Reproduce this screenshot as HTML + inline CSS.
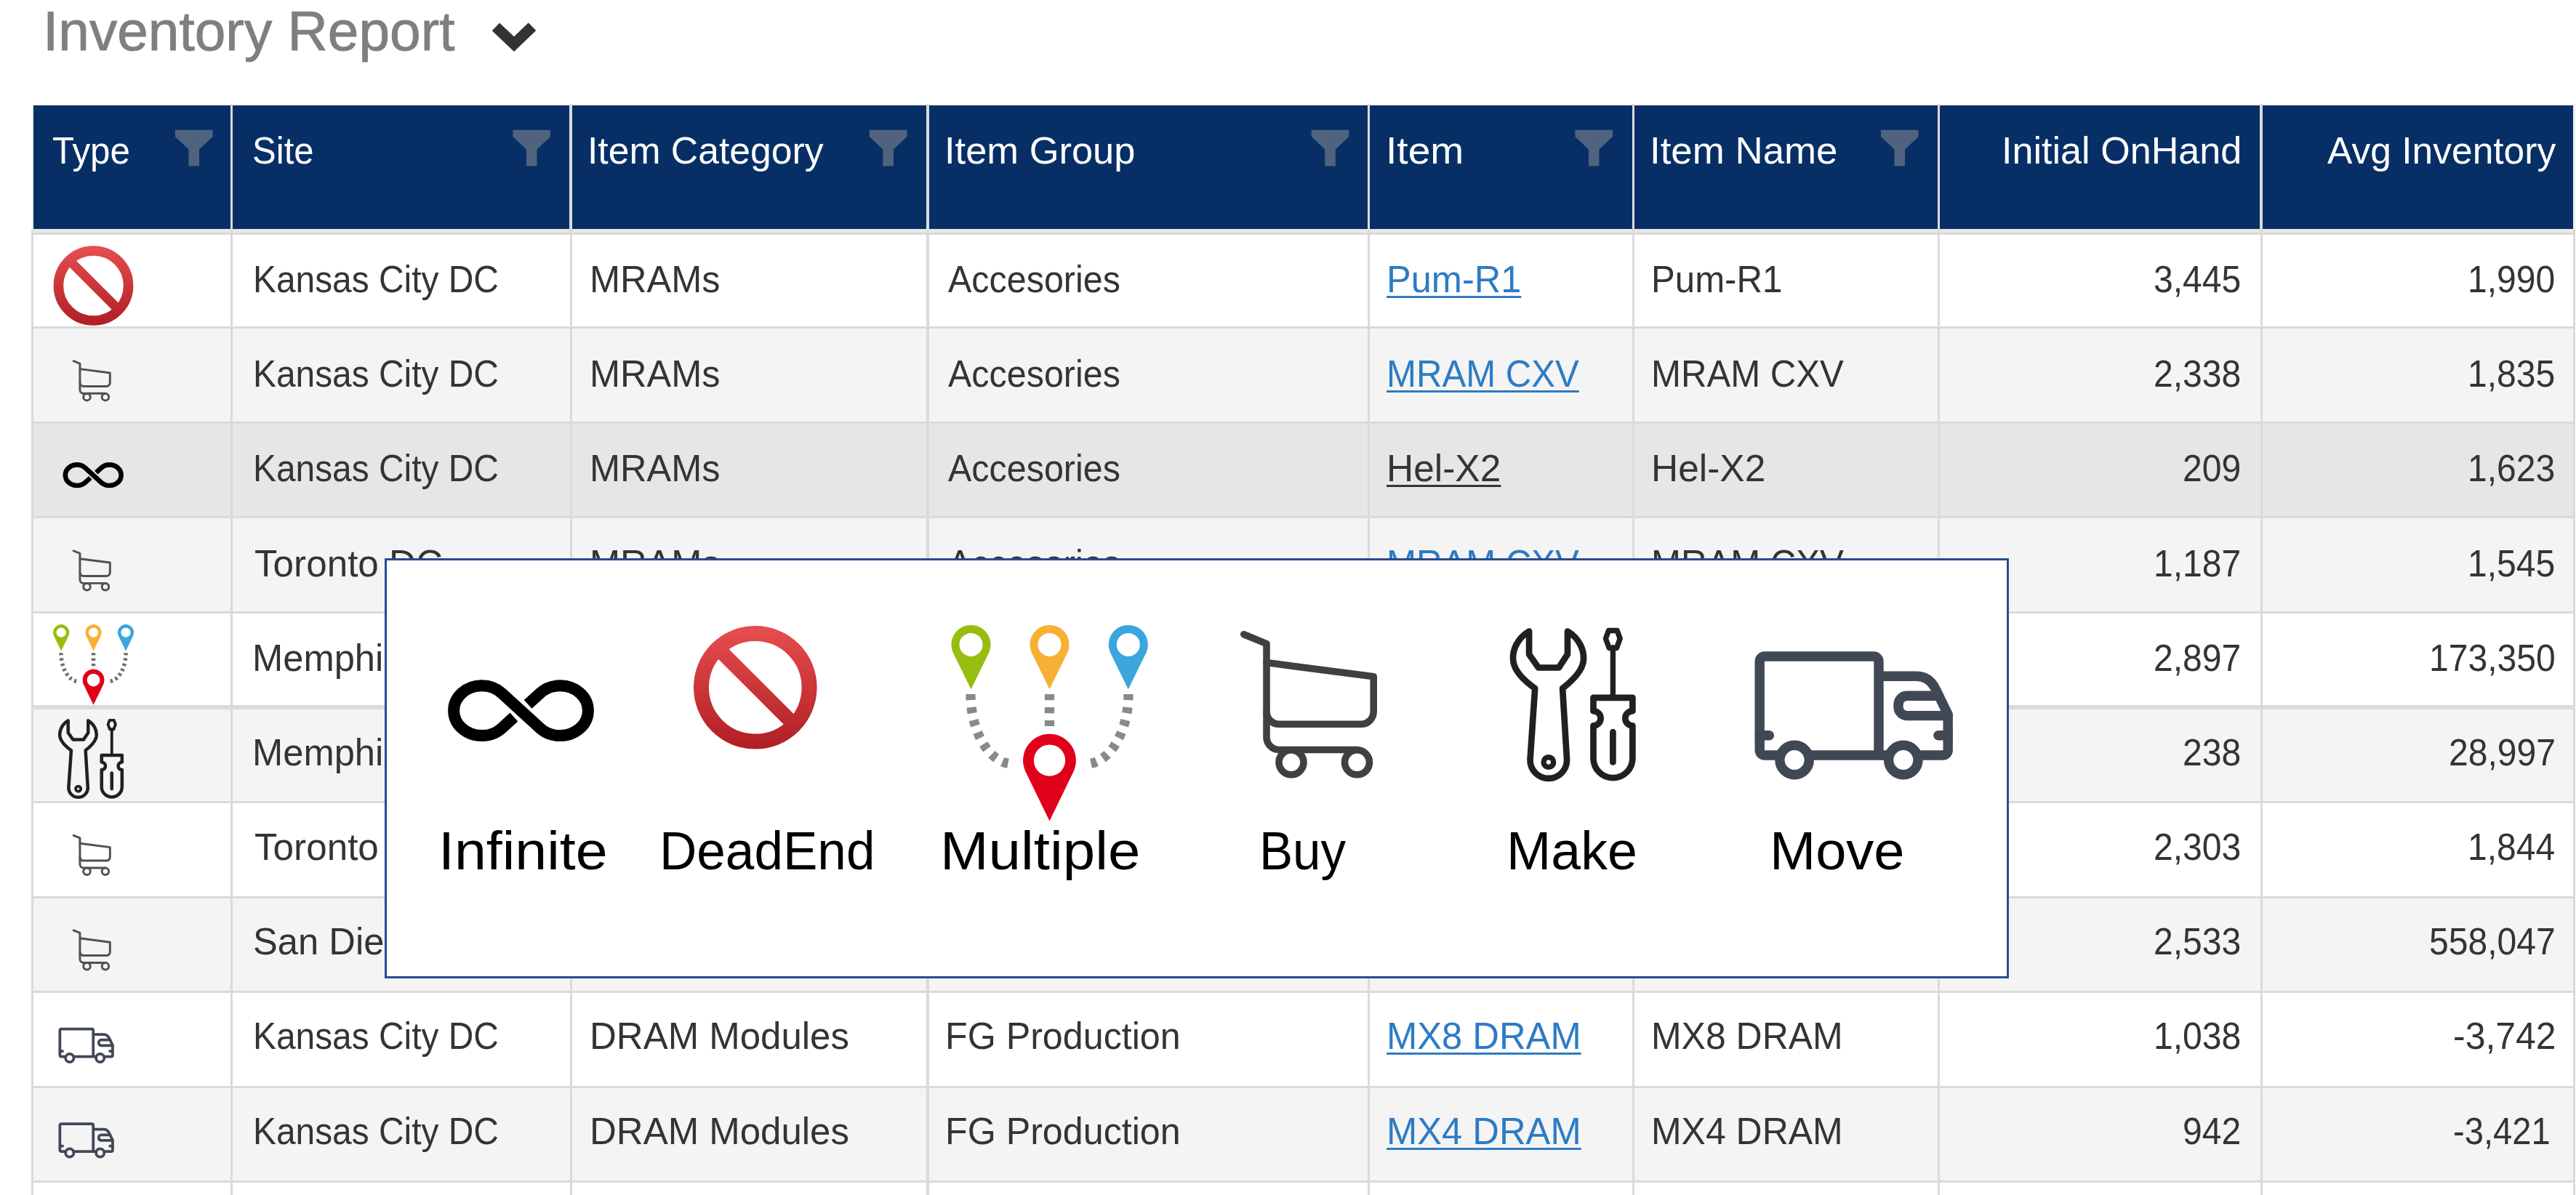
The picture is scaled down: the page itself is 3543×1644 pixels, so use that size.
<!DOCTYPE html><html><head><meta charset="utf-8"><style>
html,body{margin:0;padding:0}body{width:3543px;height:1644px;overflow:hidden;background:#fff;position:relative;font-family:"Liberation Sans",sans-serif}
.t{position:absolute;white-space:nowrap;line-height:1;transform-origin:0 0}
.r{position:absolute}
svg{position:absolute;overflow:visible}
</style></head><body>
<div class="t" style="left:59.34px;top:4.67px;font-size:76px;color:#7F7F7F;transform:scaleX(1.0083);-webkit-text-stroke:0.9px #7F7F7F;">Inventory Report</div>
<svg style="left:0;top:0" width="3543" height="1644"><polyline points="681.9,36.9 707,60.7 732,36.7" fill="none" stroke="#333333" stroke-width="15" stroke-linecap="butt" stroke-linejoin="miter"/></svg>
<div class="r" style="left:43.5px;top:144px;width:3498.0px;height:1500px;background:#EEECE9"></div>
<div class="r" style="left:43px;top:316px;width:3499px;height:1328px;background:#DADADA"></div>
<div class="r" style="left:46.00px;top:322.50px;width:271.20px;height:126.90px;background:#FFFFFF"></div>
<div class="r" style="left:320.20px;top:322.50px;width:463.50px;height:126.90px;background:#FFFFFF"></div>
<div class="r" style="left:786.70px;top:322.50px;width:487.80px;height:126.90px;background:#FFFFFF"></div>
<div class="r" style="left:1277.50px;top:322.50px;width:603.70px;height:126.90px;background:#FFFFFF"></div>
<div class="r" style="left:1884.20px;top:322.50px;width:360.80px;height:126.90px;background:#FFFFFF"></div>
<div class="r" style="left:2248.00px;top:322.50px;width:417.00px;height:126.90px;background:#FFFFFF"></div>
<div class="r" style="left:2668.00px;top:322.50px;width:440.50px;height:126.90px;background:#FFFFFF"></div>
<div class="r" style="left:3111.50px;top:322.50px;width:427.30px;height:126.90px;background:#FFFFFF"></div>
<div class="r" style="left:46.00px;top:452.40px;width:271.20px;height:127.52px;background:#F4F4F4"></div>
<div class="r" style="left:320.20px;top:452.40px;width:463.50px;height:127.52px;background:#F4F4F4"></div>
<div class="r" style="left:786.70px;top:452.40px;width:487.80px;height:127.52px;background:#F4F4F4"></div>
<div class="r" style="left:1277.50px;top:452.40px;width:603.70px;height:127.52px;background:#F4F4F4"></div>
<div class="r" style="left:1884.20px;top:452.40px;width:360.80px;height:127.52px;background:#F4F4F4"></div>
<div class="r" style="left:2248.00px;top:452.40px;width:417.00px;height:127.52px;background:#F4F4F4"></div>
<div class="r" style="left:2668.00px;top:452.40px;width:440.50px;height:127.52px;background:#F4F4F4"></div>
<div class="r" style="left:3111.50px;top:452.40px;width:427.30px;height:127.52px;background:#F4F4F4"></div>
<div class="r" style="left:46.00px;top:582.92px;width:271.20px;height:127.52px;background:#E6E6E6"></div>
<div class="r" style="left:320.20px;top:582.92px;width:463.50px;height:127.52px;background:#E6E6E6"></div>
<div class="r" style="left:786.70px;top:582.92px;width:487.80px;height:127.52px;background:#E6E6E6"></div>
<div class="r" style="left:1277.50px;top:582.92px;width:603.70px;height:127.52px;background:#E6E6E6"></div>
<div class="r" style="left:1884.20px;top:582.92px;width:360.80px;height:127.52px;background:#E6E6E6"></div>
<div class="r" style="left:2248.00px;top:582.92px;width:417.00px;height:127.52px;background:#E6E6E6"></div>
<div class="r" style="left:2668.00px;top:582.92px;width:440.50px;height:127.52px;background:#E6E6E6"></div>
<div class="r" style="left:3111.50px;top:582.92px;width:427.30px;height:127.52px;background:#E6E6E6"></div>
<div class="r" style="left:46.00px;top:713.44px;width:271.20px;height:127.52px;background:#F4F4F4"></div>
<div class="r" style="left:320.20px;top:713.44px;width:463.50px;height:127.52px;background:#F4F4F4"></div>
<div class="r" style="left:786.70px;top:713.44px;width:487.80px;height:127.52px;background:#F4F4F4"></div>
<div class="r" style="left:1277.50px;top:713.44px;width:603.70px;height:127.52px;background:#F4F4F4"></div>
<div class="r" style="left:1884.20px;top:713.44px;width:360.80px;height:127.52px;background:#F4F4F4"></div>
<div class="r" style="left:2248.00px;top:713.44px;width:417.00px;height:127.52px;background:#F4F4F4"></div>
<div class="r" style="left:2668.00px;top:713.44px;width:440.50px;height:127.52px;background:#F4F4F4"></div>
<div class="r" style="left:3111.50px;top:713.44px;width:427.30px;height:127.52px;background:#F4F4F4"></div>
<div class="r" style="left:46.00px;top:843.96px;width:271.20px;height:127.52px;background:#FFFFFF"></div>
<div class="r" style="left:320.20px;top:843.96px;width:463.50px;height:127.52px;background:#FFFFFF"></div>
<div class="r" style="left:786.70px;top:843.96px;width:487.80px;height:127.52px;background:#FFFFFF"></div>
<div class="r" style="left:1277.50px;top:843.96px;width:603.70px;height:127.52px;background:#FFFFFF"></div>
<div class="r" style="left:1884.20px;top:843.96px;width:360.80px;height:127.52px;background:#FFFFFF"></div>
<div class="r" style="left:2248.00px;top:843.96px;width:417.00px;height:127.52px;background:#FFFFFF"></div>
<div class="r" style="left:2668.00px;top:843.96px;width:440.50px;height:127.52px;background:#FFFFFF"></div>
<div class="r" style="left:3111.50px;top:843.96px;width:427.30px;height:127.52px;background:#FFFFFF"></div>
<div class="r" style="left:46.00px;top:974.48px;width:271.20px;height:127.52px;background:#F4F4F4"></div>
<div class="r" style="left:320.20px;top:974.48px;width:463.50px;height:127.52px;background:#F4F4F4"></div>
<div class="r" style="left:786.70px;top:974.48px;width:487.80px;height:127.52px;background:#F4F4F4"></div>
<div class="r" style="left:1277.50px;top:974.48px;width:603.70px;height:127.52px;background:#F4F4F4"></div>
<div class="r" style="left:1884.20px;top:974.48px;width:360.80px;height:127.52px;background:#F4F4F4"></div>
<div class="r" style="left:2248.00px;top:974.48px;width:417.00px;height:127.52px;background:#F4F4F4"></div>
<div class="r" style="left:2668.00px;top:974.48px;width:440.50px;height:127.52px;background:#F4F4F4"></div>
<div class="r" style="left:3111.50px;top:974.48px;width:427.30px;height:127.52px;background:#F4F4F4"></div>
<div class="r" style="left:46.00px;top:1105.00px;width:271.20px;height:127.52px;background:#FFFFFF"></div>
<div class="r" style="left:320.20px;top:1105.00px;width:463.50px;height:127.52px;background:#FFFFFF"></div>
<div class="r" style="left:786.70px;top:1105.00px;width:487.80px;height:127.52px;background:#FFFFFF"></div>
<div class="r" style="left:1277.50px;top:1105.00px;width:603.70px;height:127.52px;background:#FFFFFF"></div>
<div class="r" style="left:1884.20px;top:1105.00px;width:360.80px;height:127.52px;background:#FFFFFF"></div>
<div class="r" style="left:2248.00px;top:1105.00px;width:417.00px;height:127.52px;background:#FFFFFF"></div>
<div class="r" style="left:2668.00px;top:1105.00px;width:440.50px;height:127.52px;background:#FFFFFF"></div>
<div class="r" style="left:3111.50px;top:1105.00px;width:427.30px;height:127.52px;background:#FFFFFF"></div>
<div class="r" style="left:46.00px;top:1235.52px;width:271.20px;height:127.52px;background:#F4F4F4"></div>
<div class="r" style="left:320.20px;top:1235.52px;width:463.50px;height:127.52px;background:#F4F4F4"></div>
<div class="r" style="left:786.70px;top:1235.52px;width:487.80px;height:127.52px;background:#F4F4F4"></div>
<div class="r" style="left:1277.50px;top:1235.52px;width:603.70px;height:127.52px;background:#F4F4F4"></div>
<div class="r" style="left:1884.20px;top:1235.52px;width:360.80px;height:127.52px;background:#F4F4F4"></div>
<div class="r" style="left:2248.00px;top:1235.52px;width:417.00px;height:127.52px;background:#F4F4F4"></div>
<div class="r" style="left:2668.00px;top:1235.52px;width:440.50px;height:127.52px;background:#F4F4F4"></div>
<div class="r" style="left:3111.50px;top:1235.52px;width:427.30px;height:127.52px;background:#F4F4F4"></div>
<div class="r" style="left:46.00px;top:1366.04px;width:271.20px;height:127.52px;background:#FFFFFF"></div>
<div class="r" style="left:320.20px;top:1366.04px;width:463.50px;height:127.52px;background:#FFFFFF"></div>
<div class="r" style="left:786.70px;top:1366.04px;width:487.80px;height:127.52px;background:#FFFFFF"></div>
<div class="r" style="left:1277.50px;top:1366.04px;width:603.70px;height:127.52px;background:#FFFFFF"></div>
<div class="r" style="left:1884.20px;top:1366.04px;width:360.80px;height:127.52px;background:#FFFFFF"></div>
<div class="r" style="left:2248.00px;top:1366.04px;width:417.00px;height:127.52px;background:#FFFFFF"></div>
<div class="r" style="left:2668.00px;top:1366.04px;width:440.50px;height:127.52px;background:#FFFFFF"></div>
<div class="r" style="left:3111.50px;top:1366.04px;width:427.30px;height:127.52px;background:#FFFFFF"></div>
<div class="r" style="left:46.00px;top:1496.56px;width:271.20px;height:127.52px;background:#F4F4F4"></div>
<div class="r" style="left:320.20px;top:1496.56px;width:463.50px;height:127.52px;background:#F4F4F4"></div>
<div class="r" style="left:786.70px;top:1496.56px;width:487.80px;height:127.52px;background:#F4F4F4"></div>
<div class="r" style="left:1277.50px;top:1496.56px;width:603.70px;height:127.52px;background:#F4F4F4"></div>
<div class="r" style="left:1884.20px;top:1496.56px;width:360.80px;height:127.52px;background:#F4F4F4"></div>
<div class="r" style="left:2248.00px;top:1496.56px;width:417.00px;height:127.52px;background:#F4F4F4"></div>
<div class="r" style="left:2668.00px;top:1496.56px;width:440.50px;height:127.52px;background:#F4F4F4"></div>
<div class="r" style="left:3111.50px;top:1496.56px;width:427.30px;height:127.52px;background:#F4F4F4"></div>
<div class="r" style="left:46.00px;top:1627.08px;width:271.20px;height:72.92px;background:#FFFFFF"></div>
<div class="r" style="left:320.20px;top:1627.08px;width:463.50px;height:72.92px;background:#FFFFFF"></div>
<div class="r" style="left:786.70px;top:1627.08px;width:487.80px;height:72.92px;background:#FFFFFF"></div>
<div class="r" style="left:1277.50px;top:1627.08px;width:603.70px;height:72.92px;background:#FFFFFF"></div>
<div class="r" style="left:1884.20px;top:1627.08px;width:360.80px;height:72.92px;background:#FFFFFF"></div>
<div class="r" style="left:2248.00px;top:1627.08px;width:417.00px;height:72.92px;background:#FFFFFF"></div>
<div class="r" style="left:2668.00px;top:1627.08px;width:440.50px;height:72.92px;background:#FFFFFF"></div>
<div class="r" style="left:3111.50px;top:1627.08px;width:427.30px;height:72.92px;background:#FFFFFF"></div>
<div class="r" style="left:46px;top:969.98px;width:3493px;height:6px;background:#DADADA"></div>
<div class="r" style="left:46.4px;top:145.3px;width:3492.60px;height:170.10px;background:#072F66"></div>
<div class="r" style="left:46.4px;top:315.4px;width:3492.60px;height:4.4px;background:#EAE8E5"></div>
<div class="r" style="left:316.90px;top:143px;width:3.6px;height:178px;background:#DCDCDC"></div>
<div class="r" style="left:783.40px;top:143px;width:3.6px;height:178px;background:#DCDCDC"></div>
<div class="r" style="left:1274.20px;top:143px;width:3.6px;height:178px;background:#DCDCDC"></div>
<div class="r" style="left:1880.90px;top:143px;width:3.6px;height:178px;background:#DCDCDC"></div>
<div class="r" style="left:2244.70px;top:143px;width:3.6px;height:178px;background:#DCDCDC"></div>
<div class="r" style="left:2664.70px;top:143px;width:3.6px;height:178px;background:#DCDCDC"></div>
<div class="r" style="left:3108.20px;top:143px;width:3.6px;height:178px;background:#DCDCDC"></div>
<div class="t" style="left:72.45px;top:181.28px;font-size:52px;color:#FFFFFF;transform:scaleX(0.9482);">Type</div>
<div class="t" style="left:347.31px;top:181.28px;font-size:52px;color:#FFFFFF;transform:scaleX(0.9442);">Site</div>
<div class="t" style="left:808.23px;top:181.28px;font-size:52px;color:#FFFFFF;transform:scaleX(0.9938);">Item Category</div>
<div class="t" style="left:1299.15px;top:181.28px;font-size:52px;color:#FFFFFF;transform:scaleX(1.0091);">Item Group</div>
<div class="t" style="left:1905.80px;top:181.28px;font-size:52px;color:#FFFFFF;transform:scaleX(1.0602);">Item</div>
<div class="t" style="left:2268.82px;top:181.28px;font-size:52px;color:#FFFFFF;transform:scaleX(1.0166);">Item Name</div>
<div class="t" style="left:2753.29px;top:181.28px;font-size:52px;color:#FFFFFF;transform:scaleX(1.0022);">Initial OnHand</div>
<div class="t" style="left:3200.50px;top:181.28px;font-size:52px;color:#FFFFFF;transform:scaleX(0.9912);">Avg Inventory</div>
<svg style="left:0;top:0" width="1" height="1"><polygon points="240.90,178.70 292.50,178.70 292.50,188.00 274.00,205.40 274.00,228.50 259.40,228.50 259.40,205.40 240.90,188.00" fill="#50637E"/></svg>
<svg style="left:0;top:0" width="1" height="1"><polygon points="705.40,178.70 757.00,178.70 757.00,188.00 738.50,205.40 738.50,228.50 723.90,228.50 723.90,205.40 705.40,188.00" fill="#50637E"/></svg>
<svg style="left:0;top:0" width="1" height="1"><polygon points="1195.80,178.70 1247.40,178.70 1247.40,188.00 1228.90,205.40 1228.90,228.50 1214.30,228.50 1214.30,205.40 1195.80,188.00" fill="#50637E"/></svg>
<svg style="left:0;top:0" width="1" height="1"><polygon points="1803.70,178.70 1855.30,178.70 1855.30,188.00 1836.80,205.40 1836.80,228.50 1822.20,228.50 1822.20,205.40 1803.70,188.00" fill="#50637E"/></svg>
<svg style="left:0;top:0" width="1" height="1"><polygon points="2166.40,178.70 2218.00,178.70 2218.00,188.00 2199.50,205.40 2199.50,228.50 2184.90,228.50 2184.90,205.40 2166.40,188.00" fill="#50637E"/></svg>
<svg style="left:0;top:0" width="1" height="1"><polygon points="2587.00,178.70 2638.60,178.70 2638.60,188.00 2620.10,205.40 2620.10,228.50 2605.50,228.50 2605.50,205.40 2587.00,188.00" fill="#50637E"/></svg>
<div class="t" style="left:348.32px;top:358.08px;font-size:52px;color:#343434;transform:scaleX(0.9206);">Kansas City DC</div>
<div class="t" style="left:810.91px;top:358.08px;font-size:52px;color:#343434;transform:scaleX(0.9715);">MRAMs</div>
<div class="t" style="left:1304.00px;top:358.08px;font-size:52px;color:#343434;transform:scaleX(0.9313);">Accesories</div>
<div class="t" style="left:1907.11px;top:358.08px;font-size:52px;color:#2E7BC4;transform:scaleX(0.9717);text-decoration:underline;text-decoration-thickness:3px;text-underline-offset:5px;">Pum-R1</div>
<div class="t" style="left:2271.22px;top:358.08px;font-size:52px;color:#343434;transform:scaleX(0.9457);">Pum-R1</div>
<div class="t" style="left:2962.22px;top:358.08px;font-size:52px;color:#343434;transform:scaleX(0.9250);">3,445</div>
<div class="t" style="left:3394.42px;top:358.08px;font-size:52px;color:#343434;transform:scaleX(0.9250);">1,990</div>
<div class="t" style="left:348.32px;top:488.25px;font-size:52px;color:#343434;transform:scaleX(0.9206);">Kansas City DC</div>
<div class="t" style="left:810.91px;top:488.25px;font-size:52px;color:#343434;transform:scaleX(0.9715);">MRAMs</div>
<div class="t" style="left:1304.00px;top:488.25px;font-size:52px;color:#343434;transform:scaleX(0.9313);">Accesories</div>
<div class="t" style="left:1907.22px;top:488.25px;font-size:52px;color:#2E7BC4;transform:scaleX(0.9449);text-decoration:underline;text-decoration-thickness:3px;text-underline-offset:5px;">MRAM CXV</div>
<div class="t" style="left:2271.22px;top:488.25px;font-size:52px;color:#343434;transform:scaleX(0.9449);">MRAM CXV</div>
<div class="t" style="left:2962.22px;top:488.25px;font-size:52px;color:#343434;transform:scaleX(0.9250);">2,338</div>
<div class="t" style="left:3394.42px;top:488.25px;font-size:52px;color:#343434;transform:scaleX(0.9250);">1,835</div>
<div class="t" style="left:348.32px;top:618.42px;font-size:52px;color:#343434;transform:scaleX(0.9206);">Kansas City DC</div>
<div class="t" style="left:810.91px;top:618.42px;font-size:52px;color:#343434;transform:scaleX(0.9715);">MRAMs</div>
<div class="t" style="left:1304.00px;top:618.42px;font-size:52px;color:#343434;transform:scaleX(0.9313);">Accesories</div>
<div class="t" style="left:1907.04px;top:618.42px;font-size:52px;color:#343434;transform:scaleX(0.9895);text-decoration:underline;text-decoration-thickness:3px;text-underline-offset:5px;">Hel-X2</div>
<div class="t" style="left:2271.04px;top:618.42px;font-size:52px;color:#343434;transform:scaleX(0.9895);">Hel-X2</div>
<div class="t" style="left:3002.34px;top:618.42px;font-size:52px;color:#343434;transform:scaleX(0.9250);">209</div>
<div class="t" style="left:3394.42px;top:618.42px;font-size:52px;color:#343434;transform:scaleX(0.9250);">1,623</div>
<div class="t" style="left:349.51px;top:748.59px;font-size:52px;color:#343434;transform:scaleX(0.9850);">Toronto DC</div>
<div class="t" style="left:810.91px;top:748.59px;font-size:52px;color:#343434;transform:scaleX(0.9715);">MRAMs</div>
<div class="t" style="left:1304.00px;top:748.59px;font-size:52px;color:#343434;transform:scaleX(0.9313);">Accesories</div>
<div class="t" style="left:1907.22px;top:748.59px;font-size:52px;color:#2E7BC4;transform:scaleX(0.9449);text-decoration:underline;text-decoration-thickness:3px;text-underline-offset:5px;">MRAM CXV</div>
<div class="t" style="left:2271.22px;top:748.59px;font-size:52px;color:#343434;transform:scaleX(0.9449);">MRAM CXV</div>
<div class="t" style="left:2962.22px;top:748.59px;font-size:52px;color:#343434;transform:scaleX(0.9250);">1,187</div>
<div class="t" style="left:3394.42px;top:748.59px;font-size:52px;color:#343434;transform:scaleX(0.9250);">1,545</div>
<div class="t" style="left:347.10px;top:878.76px;font-size:52px;color:#343434;transform:scaleX(0.9750);">Memphis DC</div>
<div class="t" style="left:810.91px;top:878.76px;font-size:52px;color:#343434;transform:scaleX(0.9715);">MRAMs</div>
<div class="t" style="left:1304.00px;top:878.76px;font-size:52px;color:#343434;transform:scaleX(0.9313);">Accesories</div>
<div class="t" style="left:1907.22px;top:878.76px;font-size:52px;color:#2E7BC4;transform:scaleX(0.9449);text-decoration:underline;text-decoration-thickness:3px;text-underline-offset:5px;">MRAM CXV</div>
<div class="t" style="left:2271.22px;top:878.76px;font-size:52px;color:#343434;transform:scaleX(0.9449);">MRAM CXV</div>
<div class="t" style="left:2962.22px;top:878.76px;font-size:52px;color:#343434;transform:scaleX(0.9250);">2,897</div>
<div class="t" style="left:3340.91px;top:878.76px;font-size:52px;color:#343434;transform:scaleX(0.9250);">173,350</div>
<div class="t" style="left:347.10px;top:1008.93px;font-size:52px;color:#343434;transform:scaleX(0.9750);">Memphis DC</div>
<div class="t" style="left:810.91px;top:1008.93px;font-size:52px;color:#343434;transform:scaleX(0.9715);">MRAMs</div>
<div class="t" style="left:1304.00px;top:1008.93px;font-size:52px;color:#343434;transform:scaleX(0.9313);">Accesories</div>
<div class="t" style="left:1907.22px;top:1008.93px;font-size:52px;color:#2E7BC4;transform:scaleX(0.9449);text-decoration:underline;text-decoration-thickness:3px;text-underline-offset:5px;">MRAM CXV</div>
<div class="t" style="left:2271.22px;top:1008.93px;font-size:52px;color:#343434;transform:scaleX(0.9449);">MRAM CXV</div>
<div class="t" style="left:3002.34px;top:1008.93px;font-size:52px;color:#343434;transform:scaleX(0.9250);">238</div>
<div class="t" style="left:3367.67px;top:1008.93px;font-size:52px;color:#343434;transform:scaleX(0.9250);">28,997</div>
<div class="t" style="left:349.51px;top:1139.10px;font-size:52px;color:#343434;transform:scaleX(0.9850);">Toronto DC</div>
<div class="t" style="left:810.91px;top:1139.10px;font-size:52px;color:#343434;transform:scaleX(0.9715);">MRAMs</div>
<div class="t" style="left:1304.00px;top:1139.10px;font-size:52px;color:#343434;transform:scaleX(0.9313);">Accesories</div>
<div class="t" style="left:1907.22px;top:1139.10px;font-size:52px;color:#2E7BC4;transform:scaleX(0.9449);text-decoration:underline;text-decoration-thickness:3px;text-underline-offset:5px;">MRAM CXV</div>
<div class="t" style="left:2271.22px;top:1139.10px;font-size:52px;color:#343434;transform:scaleX(0.9449);">MRAM CXV</div>
<div class="t" style="left:2962.22px;top:1139.10px;font-size:52px;color:#343434;transform:scaleX(0.9250);">2,303</div>
<div class="t" style="left:3394.42px;top:1139.10px;font-size:52px;color:#343434;transform:scaleX(0.9250);">1,844</div>
<div class="t" style="left:348.05px;top:1269.27px;font-size:52px;color:#343434;transform:scaleX(0.9750);">San Diego DC</div>
<div class="t" style="left:810.91px;top:1269.27px;font-size:52px;color:#343434;transform:scaleX(0.9715);">MRAMs</div>
<div class="t" style="left:1304.00px;top:1269.27px;font-size:52px;color:#343434;transform:scaleX(0.9313);">Accesories</div>
<div class="t" style="left:1907.22px;top:1269.27px;font-size:52px;color:#2E7BC4;transform:scaleX(0.9449);text-decoration:underline;text-decoration-thickness:3px;text-underline-offset:5px;">MRAM CXV</div>
<div class="t" style="left:2271.22px;top:1269.27px;font-size:52px;color:#343434;transform:scaleX(0.9449);">MRAM CXV</div>
<div class="t" style="left:2962.22px;top:1269.27px;font-size:52px;color:#343434;transform:scaleX(0.9250);">2,533</div>
<div class="t" style="left:3340.91px;top:1269.27px;font-size:52px;color:#343434;transform:scaleX(0.9250);">558,047</div>
<div class="t" style="left:348.32px;top:1399.44px;font-size:52px;color:#343434;transform:scaleX(0.9206);">Kansas City DC</div>
<div class="t" style="left:810.88px;top:1399.44px;font-size:52px;color:#343434;transform:scaleX(0.9804);">DRAM Modules</div>
<div class="t" style="left:1300.14px;top:1399.44px;font-size:52px;color:#343434;transform:scaleX(0.9655);">FG Production</div>
<div class="t" style="left:1907.10px;top:1399.44px;font-size:52px;color:#2E7BC4;transform:scaleX(0.9752);text-decoration:underline;text-decoration-thickness:3px;text-underline-offset:5px;">MX8 DRAM</div>
<div class="t" style="left:2271.16px;top:1399.44px;font-size:52px;color:#343434;transform:scaleX(0.9609);">MX8 DRAM</div>
<div class="t" style="left:2962.22px;top:1399.44px;font-size:52px;color:#343434;transform:scaleX(0.9250);">1,038</div>
<div class="t" style="left:3373.58px;top:1399.44px;font-size:52px;color:#343434;transform:scaleX(0.9601);">-3,742</div>
<div class="t" style="left:348.32px;top:1529.61px;font-size:52px;color:#343434;transform:scaleX(0.9206);">Kansas City DC</div>
<div class="t" style="left:810.88px;top:1529.61px;font-size:52px;color:#343434;transform:scaleX(0.9804);">DRAM Modules</div>
<div class="t" style="left:1300.14px;top:1529.61px;font-size:52px;color:#343434;transform:scaleX(0.9655);">FG Production</div>
<div class="t" style="left:1907.10px;top:1529.61px;font-size:52px;color:#2E7BC4;transform:scaleX(0.9752);text-decoration:underline;text-decoration-thickness:3px;text-underline-offset:5px;">MX4 DRAM</div>
<div class="t" style="left:2271.16px;top:1529.61px;font-size:52px;color:#343434;transform:scaleX(0.9609);">MX4 DRAM</div>
<div class="t" style="left:3002.34px;top:1529.61px;font-size:52px;color:#343434;transform:scaleX(0.9250);">942</div>
<div class="t" style="left:3373.68px;top:1529.61px;font-size:52px;color:#343434;transform:scaleX(0.9077);">-3,421</div>
<svg style="left:0;top:0" width="3543" height="1644" viewBox="0 0 3543 1644"><g transform="translate(128.50,393.00) scale(0.6471)"><defs><linearGradient id="gA" x1="0" y1="-85" x2="0" y2="85" gradientUnits="userSpaceOnUse"><stop offset="0" stop-color="#E74E50"/><stop offset="1" stop-color="#B01E23"/></linearGradient><clipPath id="gAc"><circle cx="0" cy="0" r="66"/></clipPath></defs><circle cx="0" cy="0" r="74.3" fill="none" stroke="url(#gA)" stroke-width="21"/><g clip-path="url(#gAc)"><path d="M-69.5,-57.8 L-55.4,-71.9 L71.9,55.4 L57.8,69.5 Z" fill="url(#gA)"/></g></g><g transform="translate(-379.56,251.49) scale(0.2810)" fill="none" stroke="#505050" stroke-width="10.5" stroke-linecap="round" stroke-linejoin="round"><path d="M1710.8,872.7 L1742,885.6 L1742,1014.2 A17.3 17.3 0 0 0 1759.3,1031.5 L1866.5,1031.5"/><path d="M1742,911.6 L1889.2,930.8 L1889.2,979 A17.3 17.3 0 0 1 1871.9,996.3 L1759.3,996.3 A17.3 17.3 0 0 1 1742,979"/><circle cx="1776" cy="1048.8" r="17"/><circle cx="1866.5" cy="1048.8" r="17"/></g><g transform="translate(-379.56,512.53) scale(0.2810)" fill="none" stroke="#505050" stroke-width="10.5" stroke-linecap="round" stroke-linejoin="round"><path d="M1710.8,872.7 L1742,885.6 L1742,1014.2 A17.3 17.3 0 0 0 1759.3,1031.5 L1866.5,1031.5"/><path d="M1742,911.6 L1889.2,930.8 L1889.2,979 A17.3 17.3 0 0 1 1871.9,996.3 L1759.3,996.3 A17.3 17.3 0 0 1 1742,979"/><circle cx="1776" cy="1048.8" r="17"/><circle cx="1866.5" cy="1048.8" r="17"/></g><g transform="translate(-379.56,904.09) scale(0.2810)" fill="none" stroke="#505050" stroke-width="10.5" stroke-linecap="round" stroke-linejoin="round"><path d="M1710.8,872.7 L1742,885.6 L1742,1014.2 A17.3 17.3 0 0 0 1759.3,1031.5 L1866.5,1031.5"/><path d="M1742,911.6 L1889.2,930.8 L1889.2,979 A17.3 17.3 0 0 1 1871.9,996.3 L1759.3,996.3 A17.3 17.3 0 0 1 1742,979"/><circle cx="1776" cy="1048.8" r="17"/><circle cx="1866.5" cy="1048.8" r="17"/></g><g transform="translate(-379.56,1034.61) scale(0.2810)" fill="none" stroke="#505050" stroke-width="10.5" stroke-linecap="round" stroke-linejoin="round"><path d="M1710.8,872.7 L1742,885.6 L1742,1014.2 A17.3 17.3 0 0 0 1759.3,1031.5 L1866.5,1031.5"/><path d="M1742,911.6 L1889.2,930.8 L1889.2,979 A17.3 17.3 0 0 1 1871.9,996.3 L1759.3,996.3 A17.3 17.3 0 0 1 1742,979"/><circle cx="1776" cy="1048.8" r="17"/><circle cx="1866.5" cy="1048.8" r="17"/></g><g transform="translate(128.25,653.70) scale(0.4156)"><path d="M9.6,-8.8 L26.4,-24.1 A38.5 34.4 0 1 1 26.4,24.1 L-26.4,-24.1 A38.5 34.4 0 1 0 -26.4,24.1 L-9.6,8.8" fill="none" stroke="#000" stroke-width="16" stroke-linecap="butt"/></g><g transform="translate(-464.32,505.92) scale(0.4107)"><path d="M1311.25,898.77 A27 27 0 1 1 1359.75,898.77 L1335.50,948.30 Z M1319.50,886.90 a16 16 0 1 0 32.00,0 a16 16 0 1 0 -32.00,0 Z" fill="#95BE0E" fill-rule="evenodd"/><path d="M1419.25,898.77 A27 27 0 1 1 1467.75,898.77 L1443.50,948.30 Z M1427.50,886.90 a16 16 0 1 0 32.00,0 a16 16 0 1 0 -32.00,0 Z" fill="#F7B033" fill-rule="evenodd"/><path d="M1527.55,898.77 A27 27 0 1 1 1576.05,898.77 L1551.80,948.30 Z M1535.80,886.90 a16 16 0 1 0 32.00,0 a16 16 0 1 0 -32.00,0 Z" fill="#3AA6DB" fill-rule="evenodd"/><path d="M1410.74,1061.97 A36.4 36.4 0 1 1 1476.26,1061.97 L1443.50,1129.60 Z M1421.90,1046.10 a21.6 21.6 0 1 0 43.20,0 a21.6 21.6 0 1 0 -43.20,0 Z" fill="#E1001A" fill-rule="evenodd"/><path d="M1443.5,955.1 L1443.5,1000" fill="none" stroke="#6E6E6E" stroke-width="13.3" stroke-dasharray="8.2 9.7"/><path d="M1335.0,955.1 A59 96 0 0 0 1394,1051.1" fill="none" stroke="#6E6E6E" stroke-width="13.3" stroke-dasharray="8.2 9.7"/><path d="M1552.0,955.1 A59 96 0 0 1 1493,1051.1" fill="none" stroke="#6E6E6E" stroke-width="13.3" stroke-dasharray="8.2 9.7"/></g><g transform="translate(-1002.03,538.90) scale(0.5210)" fill="none" stroke="#231F20" stroke-width="8.7" stroke-linecap="round" stroke-linejoin="round"><path d="M2103.1,868.5 L2103.1,900.2 L2116,918.5 L2143.9,918.5 L2156,900.2 L2156,868.5 C2172,878 2180,895 2177.6,910.8 C2175,925 2162,937 2149.1,947 L2155.1,1045.6 A25.3 25.3 0 0 1 2104.5,1045.6 L2111.2,947 C2097,937 2084,925 2081.5,910.8 C2079,895 2087,878 2103.1,868.5 Z"/><circle cx="2129.9" cy="1048.5" r="6.8" stroke-width="7.39"/><path d="M2212.5,867.5 L2224.2,867.5 L2228.2,878.5 L2223.5,891.6 L2213.2,891.6 L2208.4,878.5 Z" stroke-width="7.39"/><path d="M2218.4,890.6 L2218.4,959.9" stroke-width="7.39"/><path d="M2191.5,959.9 L2245.4,959.9 L2245.4,978.2 A10.1 10.1 0 0 0 2245.4,998.4 L2245.4,1043.2 A26.95 26.95 0 0 1 2191.5,1043.2 L2191.5,998.4 A10.1 10.1 0 0 0 2191.5,978.2 Z"/><path d="M2218.4,1007 L2218.4,1048.5"/></g><g transform="translate(-595.28,1162.73) scale(0.2800)" fill="none" stroke="#414855" stroke-width="13.4" stroke-linecap="round" stroke-linejoin="round"><path d="M2584,930.3 L2635,930.3 C2648,930.3 2656,936 2661.6,946.9 L2679.2,982.9 L2679.2,1032.1 A6.9 6.9 0 0 1 2672.3,1039 L2427.1,1039 A6.9 6.9 0 0 1 2420.2,1032.1 L2420.2,909.9 A6.9 6.9 0 0 1 2427.1,903 L2577.1,903 A6.9 6.9 0 0 1 2584,909.9 L2584,1039"/><path d="M2666.6,957.2 L2623,957.2 A12 12 0 0 0 2611,969.2 L2611,972.6 A12 12 0 0 0 2623,984.6 L2679.2,984.6"/><path d="M2420.2,1011.7 L2433.4,1011.7 M2679.2,1011.7 L2665.9,1011.7"/><circle cx="2468.1" cy="1045.5" r="20.2" fill="#FFFFFF"/><circle cx="2617.8" cy="1045.5" r="20.2" fill="#FFFFFF"/></g><g transform="translate(-595.28,1293.25) scale(0.2800)" fill="none" stroke="#414855" stroke-width="13.4" stroke-linecap="round" stroke-linejoin="round"><path d="M2584,930.3 L2635,930.3 C2648,930.3 2656,936 2661.6,946.9 L2679.2,982.9 L2679.2,1032.1 A6.9 6.9 0 0 1 2672.3,1039 L2427.1,1039 A6.9 6.9 0 0 1 2420.2,1032.1 L2420.2,909.9 A6.9 6.9 0 0 1 2427.1,903 L2577.1,903 A6.9 6.9 0 0 1 2584,909.9 L2584,1039"/><path d="M2666.6,957.2 L2623,957.2 A12 12 0 0 0 2611,969.2 L2611,972.6 A12 12 0 0 0 2623,984.6 L2679.2,984.6"/><path d="M2420.2,1011.7 L2433.4,1011.7 M2679.2,1011.7 L2665.9,1011.7"/><circle cx="2468.1" cy="1045.5" r="20.2" fill="#F4F4F4"/><circle cx="2617.8" cy="1045.5" r="20.2" fill="#F4F4F4"/></g></svg>
<div class="r" style="left:529px;top:768px;width:2233.5px;height:578px;box-sizing:border-box;border:3px solid #284C8E;background:#fff"></div>
<svg style="left:0;top:0" width="3543" height="1644" viewBox="0 0 3543 1644"><g transform="translate(716.50,977.70) scale(1.0000)"><path d="M9.6,-8.8 L26.4,-24.1 A38.5 34.4 0 1 1 26.4,24.1 L-26.4,-24.1 A38.5 34.4 0 1 0 -26.4,24.1 L-9.6,8.8" fill="none" stroke="#000" stroke-width="16" stroke-linecap="butt"/></g><g transform="translate(1038.80,945.80) scale(1.0000)"><defs><linearGradient id="gB" x1="0" y1="-85" x2="0" y2="85" gradientUnits="userSpaceOnUse"><stop offset="0" stop-color="#E74E50"/><stop offset="1" stop-color="#B01E23"/></linearGradient><clipPath id="gBc"><circle cx="0" cy="0" r="66"/></clipPath></defs><circle cx="0" cy="0" r="74.3" fill="none" stroke="url(#gB)" stroke-width="21"/><g clip-path="url(#gBc)"><path d="M-69.5,-57.8 L-55.4,-71.9 L71.9,55.4 L57.8,69.5 Z" fill="url(#gB)"/></g></g><g transform="translate(0.00,0.00) scale(1.0000)"><path d="M1311.25,898.77 A27 27 0 1 1 1359.75,898.77 L1335.50,948.30 Z M1319.50,886.90 a16 16 0 1 0 32.00,0 a16 16 0 1 0 -32.00,0 Z" fill="#95BE0E" fill-rule="evenodd"/><path d="M1419.25,898.77 A27 27 0 1 1 1467.75,898.77 L1443.50,948.30 Z M1427.50,886.90 a16 16 0 1 0 32.00,0 a16 16 0 1 0 -32.00,0 Z" fill="#F7B033" fill-rule="evenodd"/><path d="M1527.55,898.77 A27 27 0 1 1 1576.05,898.77 L1551.80,948.30 Z M1535.80,886.90 a16 16 0 1 0 32.00,0 a16 16 0 1 0 -32.00,0 Z" fill="#3AA6DB" fill-rule="evenodd"/><path d="M1410.74,1061.97 A36.4 36.4 0 1 1 1476.26,1061.97 L1443.50,1129.60 Z M1421.90,1046.10 a21.6 21.6 0 1 0 43.20,0 a21.6 21.6 0 1 0 -43.20,0 Z" fill="#E1001A" fill-rule="evenodd"/><path d="M1443.5,955.1 L1443.5,1000" fill="none" stroke="#898989" stroke-width="13.3" stroke-dasharray="8.2 9.7"/><path d="M1335.0,955.1 A59 96 0 0 0 1394,1051.1" fill="none" stroke="#898989" stroke-width="13.3" stroke-dasharray="8.2 9.7"/><path d="M1552.0,955.1 A59 96 0 0 1 1493,1051.1" fill="none" stroke="#898989" stroke-width="13.3" stroke-dasharray="8.2 9.7"/></g><g transform="translate(0.00,0.00) scale(1.0000)" fill="none" stroke="#404040" stroke-width="9.6" stroke-linecap="round" stroke-linejoin="round"><path d="M1710.8,872.7 L1742,885.6 L1742,1014.2 A17.3 17.3 0 0 0 1759.3,1031.5 L1866.5,1031.5"/><path d="M1742,911.6 L1889.2,930.8 L1889.2,979 A17.3 17.3 0 0 1 1871.9,996.3 L1759.3,996.3 A17.3 17.3 0 0 1 1742,979"/><circle cx="1776" cy="1048.8" r="17"/><circle cx="1866.5" cy="1048.8" r="17"/></g><g transform="translate(0.00,0.00) scale(1.0000)" fill="none" stroke="#231F20" stroke-width="8.7" stroke-linecap="round" stroke-linejoin="round"><path d="M2103.1,868.5 L2103.1,900.2 L2116,918.5 L2143.9,918.5 L2156,900.2 L2156,868.5 C2172,878 2180,895 2177.6,910.8 C2175,925 2162,937 2149.1,947 L2155.1,1045.6 A25.3 25.3 0 0 1 2104.5,1045.6 L2111.2,947 C2097,937 2084,925 2081.5,910.8 C2079,895 2087,878 2103.1,868.5 Z"/><circle cx="2129.9" cy="1048.5" r="6.8" stroke-width="7.39"/><path d="M2212.5,867.5 L2224.2,867.5 L2228.2,878.5 L2223.5,891.6 L2213.2,891.6 L2208.4,878.5 Z" stroke-width="7.39"/><path d="M2218.4,890.6 L2218.4,959.9" stroke-width="7.39"/><path d="M2191.5,959.9 L2245.4,959.9 L2245.4,978.2 A10.1 10.1 0 0 0 2245.4,998.4 L2245.4,1043.2 A26.95 26.95 0 0 1 2191.5,1043.2 L2191.5,998.4 A10.1 10.1 0 0 0 2191.5,978.2 Z"/><path d="M2218.4,1007 L2218.4,1048.5"/></g><g transform="translate(0.00,0.00) scale(1.0000)" fill="none" stroke="#414855" stroke-width="13.4" stroke-linecap="round" stroke-linejoin="round"><path d="M2584,930.3 L2635,930.3 C2648,930.3 2656,936 2661.6,946.9 L2679.2,982.9 L2679.2,1032.1 A6.9 6.9 0 0 1 2672.3,1039 L2427.1,1039 A6.9 6.9 0 0 1 2420.2,1032.1 L2420.2,909.9 A6.9 6.9 0 0 1 2427.1,903 L2577.1,903 A6.9 6.9 0 0 1 2584,909.9 L2584,1039"/><path d="M2666.6,957.2 L2623,957.2 A12 12 0 0 0 2611,969.2 L2611,972.6 A12 12 0 0 0 2623,984.6 L2679.2,984.6"/><path d="M2420.2,1011.7 L2433.4,1011.7 M2679.2,1011.7 L2665.9,1011.7"/><circle cx="2468.1" cy="1045.5" r="20.2" fill="#fff"/><circle cx="2617.8" cy="1045.5" r="20.2" fill="#fff"/></g></svg>
<div class="t" style="left:602.53px;top:1133.86px;font-size:74px;color:#000000;transform:scaleX(1.0673);">Infinite</div>
<div class="t" style="left:906.74px;top:1133.86px;font-size:74px;color:#000000;transform:scaleX(0.9606);">DeadEnd</div>
<div class="t" style="left:1292.82px;top:1133.86px;font-size:74px;color:#000000;transform:scaleX(1.0801);">Multiple</div>
<div class="t" style="left:1732.09px;top:1133.86px;font-size:74px;color:#000000;transform:scaleX(0.9344);">Buy</div>
<div class="t" style="left:2071.83px;top:1133.86px;font-size:74px;color:#000000;transform:scaleX(0.9942);">Make</div>
<div class="t" style="left:2433.85px;top:1133.86px;font-size:74px;color:#000000;transform:scaleX(1.0250);">Move</div>
</body></html>
